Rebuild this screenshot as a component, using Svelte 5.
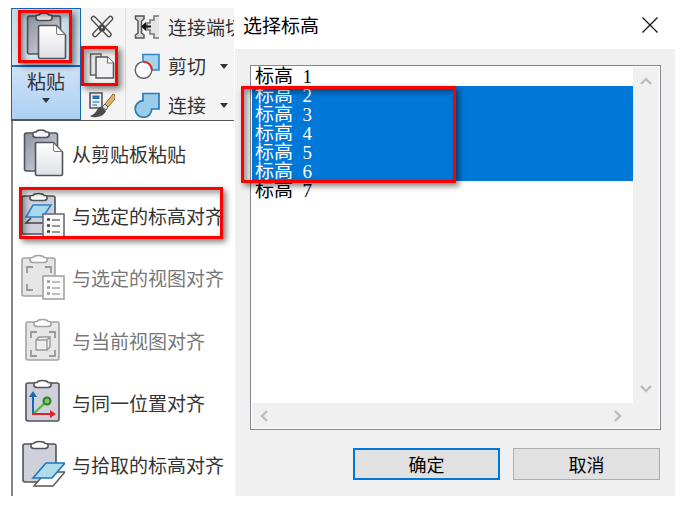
<script lang="ts">
    const levels = [1, 2, 3, 4, 5, 6, 7];
    let selected = $state([2, 3, 4, 5, 6]);

    const toggle = (level: number) => {
        selected = selected.includes(level)
            ? selected.filter((l) => l !== level)
            : [...selected, level];
    };

    const tools = [
        { id: 'cope', label: '连接端切', arrow: false },
        { id: 'cut', label: '剪切', arrow: true },
        { id: 'join', label: '连接', arrow: true }
    ];

    const menu = [
        { id: 'clipboard', label: '从剪贴板粘贴' },
        { id: 'levels', label: '与选定的标高对齐', marked: true },
        { id: 'views', label: '与选定的视图对齐', disabled: true },
        { id: 'current', label: '与当前视图对齐', disabled: true },
        { id: 'same', label: '与同一位置对齐' },
        { id: 'picked', label: '与拾取的标高对齐' }
    ];
</script>

{#snippet board(x: number, y: number, light: boolean)}
    <g transform="translate({x} {y})" stroke={light ? '#a3a3a3' : '#50535a'} stroke-width="1.6">
        <rect x="0" y="3" width="33" height="38" rx="2" fill={light ? '#e6e6e6' : '#cfd0d9'} />
        <path d="M8 6V3.5Q8 2.5 10 2.5H11Q12 .5 16.500 .5T22 2.500H23Q25 2.500 25 3.500V6Q24 7.500 22 7.500H11Q9 7.500 8 6Z" fill="#fff" />
    </g>
{/snippet}

{#snippet sheet(light: boolean)}
    <rect x="22" y="23" width="21" height="23" fill="#fafafa" stroke={light ? '#a3a3a3' : '#6a6e76'} stroke-width="1.6" />
    <path d="M26 28.500h3M26 34.500h3M26 40.500h3" stroke={light ? '#999' : '#444'} stroke-width="2.500" />
    <path d="M31 29h8M31 35h8M31 41h8" stroke={light ? '#aaa' : '#777'} stroke-width="1.600" />
{/snippet}

{#snippet paste()}
    <svg width="44" height="50" viewBox="0 0 44 50" aria-hidden="true">
        <defs>
            <linearGradient id="board-fill" x2="1" y2="1">
                <stop stop-color="#8d92a1" />
                <stop offset="1" stop-color="#dcdde4" />
            </linearGradient>
            <linearGradient id="page-fill" x2="0" y2="1">
                <stop stop-color="#fff" />
                <stop offset="1" stop-color="#dfe0e6" />
            </linearGradient>
        </defs>
        <rect x="3.500" y="4" width="33" height="38" rx="2" fill="url(#board-fill)" stroke="#50535a" stroke-width="1.600" />
        <path d="M12 7V4Q12 3 14 3H15Q16 1 20 1T25 3H26Q28 3 28 4V7Q27 8.500 25 8.500H15Q13 8.500 12 7Z" fill="#f4f4f4" stroke="#50535a" stroke-width="1.600" />
        <path d="M16 13.500H32.500L41.500 23V45Q41.500 46.500 40 46.500H16Q14.500 46.500 14.500 45V15Q14.500 13.500 16 13.500Z" fill="url(#page-fill)" stroke="#50535a" stroke-width="1.600" />
        <path d="M32.500 14V21Q32.500 22.500 34 22.500H41Z" fill="#fff" stroke="#777" />
    </svg>
{/snippet}

{#snippet menuIcon(id: string)}
    {#if id === 'clipboard'}
        {@render paste()}
    {:else}
        <svg width="44" height="50" viewBox="0 0 44 50" aria-hidden="true">
            {#if id === 'levels'}
                {@render board(1, 2, false)}
                <path d="M12 14H30L22 26H5Z" fill="#a9d9ef" stroke="#2d83c9" stroke-width="1.600" />
                <path d="M10 27L5 32H22" fill="none" stroke="#444" stroke-width="1.600" />
                {@render sheet(false)}
            {:else if id === 'views'}
                {@render board(1, 2, true)}
                <path d="M6 20V14H12M24 14H30V20M6 31V37H12" fill="none" stroke="#999" stroke-width="1.800" />
                {@render sheet(true)}
            {:else if id === 'current'}
                {@render board(5, 3, true)}
                <path d="M10 22V16H16M28 16H34V22M10 34V40H16M28 40H34V34" fill="none" stroke="#999" stroke-width="1.800" />
                <path d="M15 24L18 21H29V31L26 34H15ZM15 24H26V34M26 24L29 21" fill="#eee" stroke="#999" stroke-width="1.400" />
            {:else if id === 'same'}
                {@render board(5, 2, false)}
                <path d="M12 36L24 25" stroke="#45bd35" stroke-width="2" />
                <circle cx="26" cy="23" r="3.500" fill="#7fc46f" stroke="#27811f" stroke-width="2" />
                <path d="M12 36V17" stroke="#1769b5" stroke-width="2" />
                <path d="M8 19L12 13L16 19Z" fill="#1769b5" />
                <path d="M11 36H30" stroke="#e02127" stroke-width="2" />
                <path d="M29 32L35 36L29 40Z" fill="#e02127" />
            {:else}
                {@render board(2, 1, false)}
                <path d="M25 32H44L32 46H13Z" fill="#fff" stroke="#555" stroke-width="1.400" />
                <path d="M25 23H44L31 38H12Z" fill="#afdcea" stroke="#1f75c0" stroke-width="1.600" />
            {/if}
        </svg>
    {/if}
{/snippet}

{#snippet toolIcon(id: string)}
    <svg width="26" height="26" viewBox="0 0 26 26" aria-hidden="true">
        {#if id === 'cope'}
            <path d="M1.500 2H10V5L7.500 7V19L10 21V24H1.500V21L4 19V7L1.500 5Z" fill="#d8d8dc" stroke="#555" stroke-width="1.500" />
            <path d="M25 2H20V6H16V9H13V16H16V20H20V24H25" fill="#e4e4e6" stroke="#777" stroke-width="1.600" />
            <path d="M9 12.500H17" stroke="#111" stroke-width="2" />
            <path d="M12 8L7 12.500L12 17Z" fill="#111" />
        {:else if id === 'cut'}
            <path d="M9 1.500H25V17H9Z" fill="#a6d4ee" stroke="#3386bd" stroke-width="1.600" />
            <circle cx="9.500" cy="17" r="8.300" fill="#fff" stroke="#666" stroke-width="1.500" />
            <path d="M9.500 8.700A8.300 8.300 0 0 1 17.800 17" fill="none" stroke="#f02626" stroke-width="2" />
        {:else}
            <path d="M9 1.500H25V17H17.800A8.300 8.300 0 1 1 9 8.700Z" fill="#9acdea" stroke="#2a7ab5" stroke-width="1.700" />
        {/if}
    </svg>
{/snippet}

{#snippet chevron(d: string)}
    <svg width="12" height="12" viewBox="0 0 12 12" aria-hidden="true">
        <path {d} fill="none" stroke="#bdbdbd" stroke-width="2.400" />
    </svg>
{/snippet}

<div class="page">
    <aside class="panel">
        <div class="ribbon">
            <div class="paste">
                <button class="paste-main" aria-label="粘贴">
                    {@render paste()}
                    <span class="mark mark-paste"></span>
                </button>
                <button class="paste-more">
                    粘贴
                    <i class="arrow"></i>
                </button>
            </div>

            <div class="small-tools">
                <button aria-label="剪切到剪贴板">
                    <svg width="26" height="26" viewBox="0 0 26 26" aria-hidden="true">
                        <g fill="none" stroke-linecap="round">
                            <path d="M4.500 4.500L20 20.500M21.500 4.500L6 20.500" stroke="#4d4d4d" stroke-width="5.500" />
                            <path d="M4.500 4.500L20 20.500M21.500 4.500L6 20.500" stroke="#f3f3f3" stroke-width="2.800" />
                        </g>
                        <path d="M13 9L17 13L15.500 17H10.500L9 13Z" fill="#444" />
                        <circle cx="13" cy="13.500" r="1" fill="#ddd" />
                    </svg>
                </button>
                <button class="copy" aria-label="复制到剪贴板">
                    <svg width="26" height="26" viewBox="0 0 26 26" aria-hidden="true">
                        <path d="M1.500 1H12V22H1.500Z" fill="#e6e6ea" stroke="#666" stroke-width="1.500" />
                        <path d="M7 4H18.500L24.500 10V25H7Z" fill="#f1f1f4" stroke="#555" stroke-width="1.500" />
                        <path d="M18.500 4V10H24.500" fill="#fff" stroke="#777" stroke-width="1.200" />
                    </svg>
                    <span class="mark mark-copy"></span>
                </button>
                <button aria-label="匹配类型属性">
                    <svg width="26" height="26" viewBox="0 0 26 26" aria-hidden="true">
                        <path d="M1 1H13V16H1Z" fill="#eef0f4" stroke="#555" stroke-width="1.600" />
                        <path d="M3.500 3.500H10.500V7H3.500Z" fill="#2471bd" />
                        <path d="M3.500 10H10.500M3.500 13H8" stroke="#5c9bd3" stroke-width="1.600" />
                        <path d="M16 12L24 2L26 3V7L19 15Z" fill="#d9b46a" stroke="#8b6a30" />
                        <path d="M13 15L16 12L19 15L17 18Z" fill="#ddd" stroke="#555" />
                        <path d="M1 24Q6 22 8 18Q10 14 13 15L17 19Q15 24 8 25Q4 26 1 24Z" fill="#4c4c4c" />
                    </svg>
                </button>
            </div>

            <div class="tools">
                {#each tools as tool}
                    <button>
                        {@render toolIcon(tool.id)}
                        <span>{tool.label}</span>
                        {#if tool.arrow}<i class="arrow"></i>{/if}
                    </button>
                {/each}
            </div>
        </div>

        <div class="menu">
            {#each menu as item}
                <button disabled={item.disabled}>
                    {@render menuIcon(item.id)}
                    <span>{item.label}</span>
                    {#if item.marked}<span class="mark mark-menu"></span>{/if}
                </button>
            {/each}
        </div>
    </aside>

    <section class="dialog">
        <header>
            <h1>选择标高</h1>
            <button class="close" aria-label="关闭">
                <svg width="16" height="16" viewBox="0 0 16 16" aria-hidden="true">
                    <path d="M0.500 0.500L15.500 15.500M15.500 0.500L0.500 15.500" stroke="#111" stroke-width="1.300" />
                </svg>
            </button>
        </header>

        <div class="content">
            <div class="listbox">
                <div class="levels" role="listbox" aria-multiselectable="true" aria-label="选择标高">
                    {#each levels as level}
                        <button
                            role="option"
                            aria-selected={selected.includes(level)}
                            class:selected={selected.includes(level)}
                            onclick={() => toggle(level)}
                        >标高&nbsp; {level}</button>
                    {/each}
                </div>
                <div class="scroll-y">
                    {@render chevron('M1 9L6 4L11 9')}
                    {@render chevron('M1 3L6 8L11 3')}
                </div>
                <div class="scroll-x">
                    {@render chevron('M9 1L4 6L9 11')}
                    {@render chevron('M3 1L8 6L3 11')}
                </div>
                <span class="mark mark-list"></span>
            </div>

            <div class="actions">
                <button class="ok">确定</button>
                <button>取消</button>
            </div>
        </div>
    </section>
</div>

<style>
    :global(body) {
        margin: 0;
        background: #fff;
    }

    .page {
        display: flex;
        padding: 8px 8px 16px 11px;
        font-family: 'Noto Sans CJK SC', sans-serif;
        font-size: 19px;
        line-height: 24px;
        color: #333;
    }

    button {
        display: flex;
        align-items: center;
        padding: 0;
        border: none;
        background: none;
        font: inherit;
        color: inherit;
        white-space: nowrap;
    }

    svg {
        display: block;
        flex: none;
    }

    .panel {
        flex: none;
        width: 224px;
        display: flex;
        flex-direction: column;
    }

    .ribbon {
        display: flex;
        margin-right: 1px;
        background: #f4f4f4;
        border-bottom: 1px solid #555;
    }

    .paste {
        width: 70px;
        box-sizing: border-box;
        border: 1px solid #1766b4;
        background: #b9d6f3;
    }

    .paste-main {
        position: relative;
        width: 100%;
        height: 58px;
        justify-content: center;
        background: linear-gradient(#c3dbe8, #d8e9f1);
        border-bottom: 2px solid #1766b4;
    }

    .paste-more {
        width: 100%;
        height: 52px;
        box-sizing: border-box;
        flex-direction: column;
        gap: 5px;
        padding-top: 2px;
        background: linear-gradient(#cfe2f6, #acd0f4);
    }

    .arrow {
        border: 4px solid transparent;
        border-top: 5px solid #333;
        border-bottom: 0;
    }

    .small-tools,
    .tools {
        display: flex;
        flex-direction: column;
        gap: 13px;
        padding: 6px 0 2px 8px;
    }

    .small-tools {
        width: 36px;
    }

    .small-tools button {
        width: 26px;
        height: 26px;
    }

    .small-tools .copy {
        position: relative;
    }

    .tools {
        flex: 1;
        min-width: 0;
        overflow: hidden;
        border-left: 1px solid #dbe6d2;
    }

    .tools button {
        height: 26px;
        gap: 8px;
    }

    .tools .arrow {
        margin-left: 6px;
    }

    .menu {
        flex: 1;
        display: flex;
        flex-direction: column;
        padding-top: 2px;
        border-left: 2px solid #858585;
    }

    .menu button {
        flex: 1;
        position: relative;
        gap: 7px;
        padding-left: 8px;
    }

    .menu button:disabled {
        color: #777;
    }

    /* red call-outs over the controls to click */
    .mark {
        position: absolute;
        z-index: 1;
        border: 3px solid #f00;
        box-sizing: border-box;
        box-shadow: 3px 3px 6px rgba(0, 0, 0, 0.5), inset 3px 3px 6px rgba(0, 0, 0, 0.4);
        pointer-events: none;
    }

    .mark-paste {
        inset: 1px 8px 2px 6px;
    }

    .mark-copy {
        inset: -7px -3px -7px -8px;
    }

    .mark-menu {
        inset: 2px 12px 8px 6px;
    }

    .mark-list {
        top: 20px;
        left: -10px;
        width: 215px;
        height: 97px;
    }

    .dialog {
        flex: 1;
        min-width: 0;
        color: #000;
    }

    header {
        display: flex;
        align-items: center;
        justify-content: space-between;
        height: 34px;
        padding: 0 17px 7px 8px;
    }

    h1 {
        margin: 0;
        font-size: 19px;
        font-weight: 400;
    }

    .content {
        padding: 16px 14px 16px 15px;
        background: #f0f0f0;
    }

    .listbox {
        position: relative;
        display: grid;
        grid-template-columns: 1fr 26px;
        grid-template-rows: 336px 25px;
        padding: 1px;
        border: 1px solid #828790;
        background: #fff;
    }

    .levels {
        font-family: 'Liberation Serif', 'Noto Sans CJK SC', serif;
        line-height: 19px;
    }

    .levels button {
        width: 100%;
        height: 19px;
        padding-left: 3px;
    }

    .levels .selected {
        background: #0078d7;
        color: #fff;
    }

    .scroll-y,
    .scroll-x {
        display: flex;
        align-items: center;
        justify-content: space-between;
        background: #f0f0f0;
    }

    .scroll-y {
        flex-direction: column;
        padding: 8px 0;
    }

    .scroll-x {
        grid-column: 1 / 3;
        padding: 0 35px 0 6px;
    }

    .actions {
        display: flex;
        justify-content: flex-end;
        gap: 13px;
        margin: 18px 1px 0 0;
    }

    .actions button {
        width: 147px;
        height: 32px;
        justify-content: center;
        border: 1px solid #adadad;
        background: #e1e1e1;
        font-size: 18px;
    }

    .actions .ok {
        border: 2px solid #0078d7;
    }
</style>
